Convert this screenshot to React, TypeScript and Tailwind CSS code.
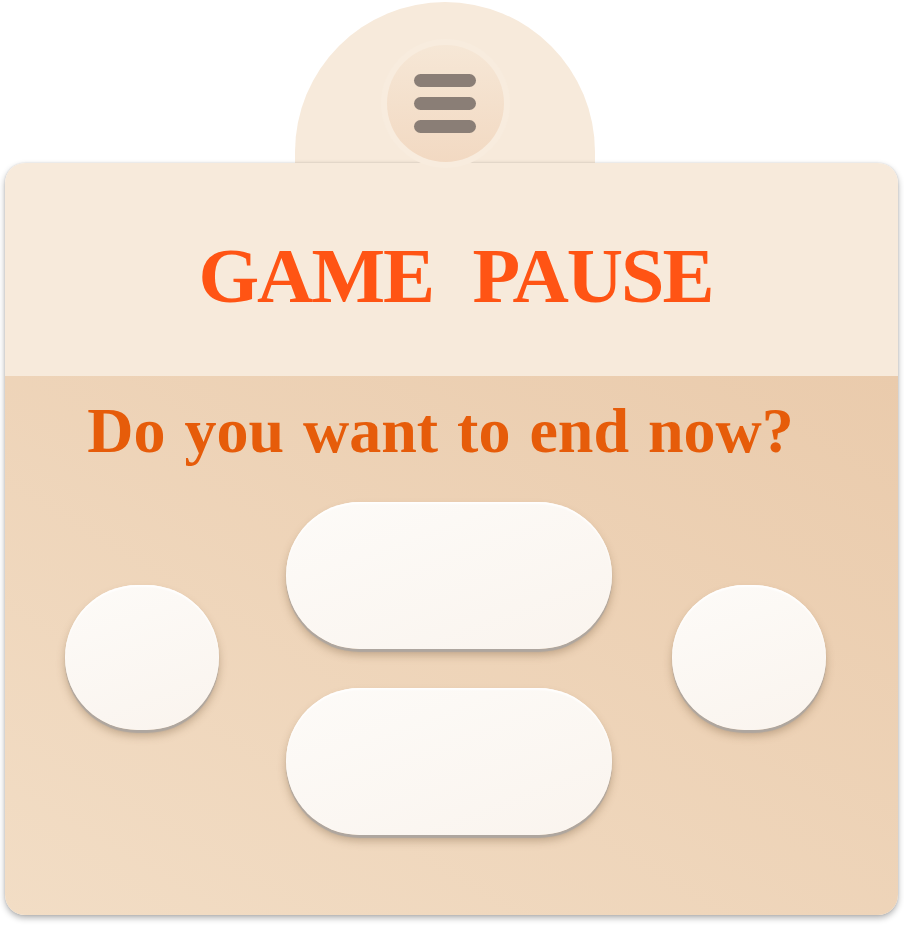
import React from 'react';

const serif = { fontFamily: '"Liberation Serif", "Times New Roman", serif' };

function RoundButton() {
  return (
    <button className="w-[154px] h-[145px] shrink-0 rounded-full bg-[linear-gradient(160deg,#fdfbf8,#faf4ee)] shadow-[inset_0_2px_2px_rgba(255,255,255,0.9),0_3px_1px_#aea69f,0_6px_8px_rgba(110,80,50,0.35)]" />
  );
}

function PillButton() {
  return (
    <button className="w-[326px] h-[147px] rounded-full bg-[linear-gradient(160deg,#fdfbf8,#faf4ee)] shadow-[inset_0_2px_2px_rgba(255,255,255,0.9),0_3px_1px_#aea69f,0_6px_8px_rgba(110,80,50,0.35)]" />
  );
}

export default function App() {
  return (
    <div className="w-[904px] h-[929px] bg-white pt-[2px] pl-[5px]">
      {/* Tab with menu */}
      <div className="ml-[290px] w-[300px] h-[161px] rounded-t-[150px] bg-[#f7eadb] flex justify-center pt-[37px]">
        <div className="w-[129px] h-[129px] rounded-full bg-[#f8ecde] p-[6px]">
          <div className="w-full h-full rounded-full bg-[linear-gradient(to_bottom,#f6e7d6,#f2d9c2)] flex flex-col items-center justify-center gap-[10px]">
            <span className="block w-[62px] h-[13px] rounded-full bg-[#8a7e76]" />
            <span className="block w-[62px] h-[13px] rounded-full bg-[#8a7e76]" />
            <span className="block w-[62px] h-[13px] rounded-full bg-[#8a7e76]" />
          </div>
        </div>
      </div>

      {/* Card */}
      <div className="w-[893px] rounded-[20px] overflow-hidden shadow-[0_3px_6px_rgba(0,0,0,0.3),0_0_2px_rgba(0,0,0,0.15)]">
        <div className="h-[213px] bg-[#f7eadb] pt-[74px] text-center">
          <h1
            style={serif}
            className="text-[78px] leading-none font-bold text-[#ff5414] tracking-[-2px] [word-spacing:22px] pl-[8px]"
          >
            GAME PAUSE
          </h1>
        </div>

        <div className="h-[539px] bg-[linear-gradient(to_bottom_left,#eacbac,#f2ddc5)] pt-[23px]">
          <p
            style={serif}
            className="text-[64px] leading-none font-bold text-[#e65c0a] text-center pr-[22px] [word-spacing:3px]"
          >
            Do you want to end now?
          </p>

          <div className="mt-[39px] flex items-start pl-[60px]">
            <div className="mt-[83px]">
              <RoundButton />
            </div>
            <div className="ml-[67px] flex flex-col gap-[39px]">
              <PillButton />
              <PillButton />
            </div>
            <div className="ml-[60px] mt-[83px]">
              <RoundButton />
            </div>
          </div>
        </div>
      </div>
    </div>
  );
}
